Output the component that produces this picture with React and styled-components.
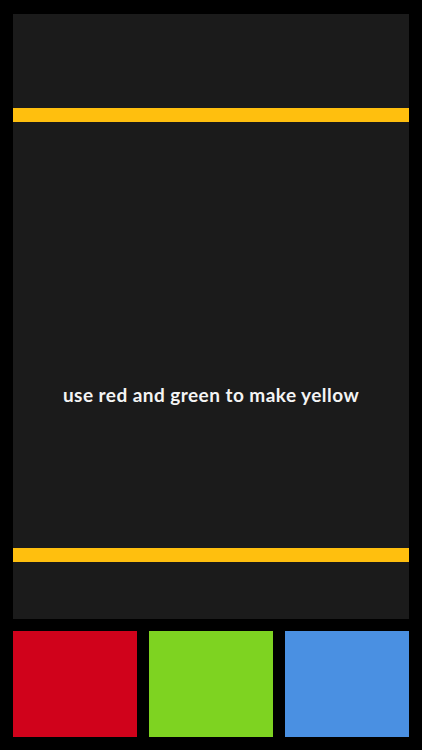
import React from "react";
import styled, { createGlobalStyle } from "styled-components";

const GlobalStyle = createGlobalStyle`
  html, body {
    margin: 0;
    padding: 0;
    background: #000;
  }
  body {
    font-family: "Lato", "Open Sans", sans-serif;
  }
`;

const Screen = styled.div`
  width: 422px;
  height: 750px;
  box-sizing: border-box;
  padding: 14px 13px 13px;
  display: flex;
  flex-direction: column;
  gap: 12px;
  background: #000;
`;

const Board = styled.div`
  height: 605px;
  background: #1b1b1b;
  display: flex;
  flex-direction: column;
  padding-top: 94px;
  box-sizing: border-box;
`;

const Bar = styled.div`
  height: 14px;
  background: #ffbf0e;
  flex-shrink: 0;
`;

const Middle = styled.div`
  height: 426px;
  box-sizing: border-box;
  padding-top: 118px;
  display: flex;
  align-items: center;
  justify-content: center;
`;

const Hint = styled.p`
  margin: 0;
  color: #f4f4f4;
  font-size: 19px;
  font-weight: 700;
  letter-spacing: 0.45px;
`;

const Palette = styled.div`
  display: grid;
  grid-template-columns: repeat(3, 1fr);
  gap: 12px;
  height: 106px;
`;

const Swatch = styled.button`
  border: none;
  padding: 0;
  background: ${(p) => p.$color};
  cursor: pointer;
`;

const colors = ["#d0021b", "#7ed321", "#4a90e2"];

export default function App() {
  return (
    <>
      <GlobalStyle />
      <Screen>
        <Board>
          <Bar />
          <Middle>
            <Hint>use red and green to make yellow</Hint>
          </Middle>
          <Bar />
        </Board>
        <Palette>
          {colors.map((c) => (
            <Swatch key={c} $color={c} />
          ))}
        </Palette>
      </Screen>
    </>
  );
}
